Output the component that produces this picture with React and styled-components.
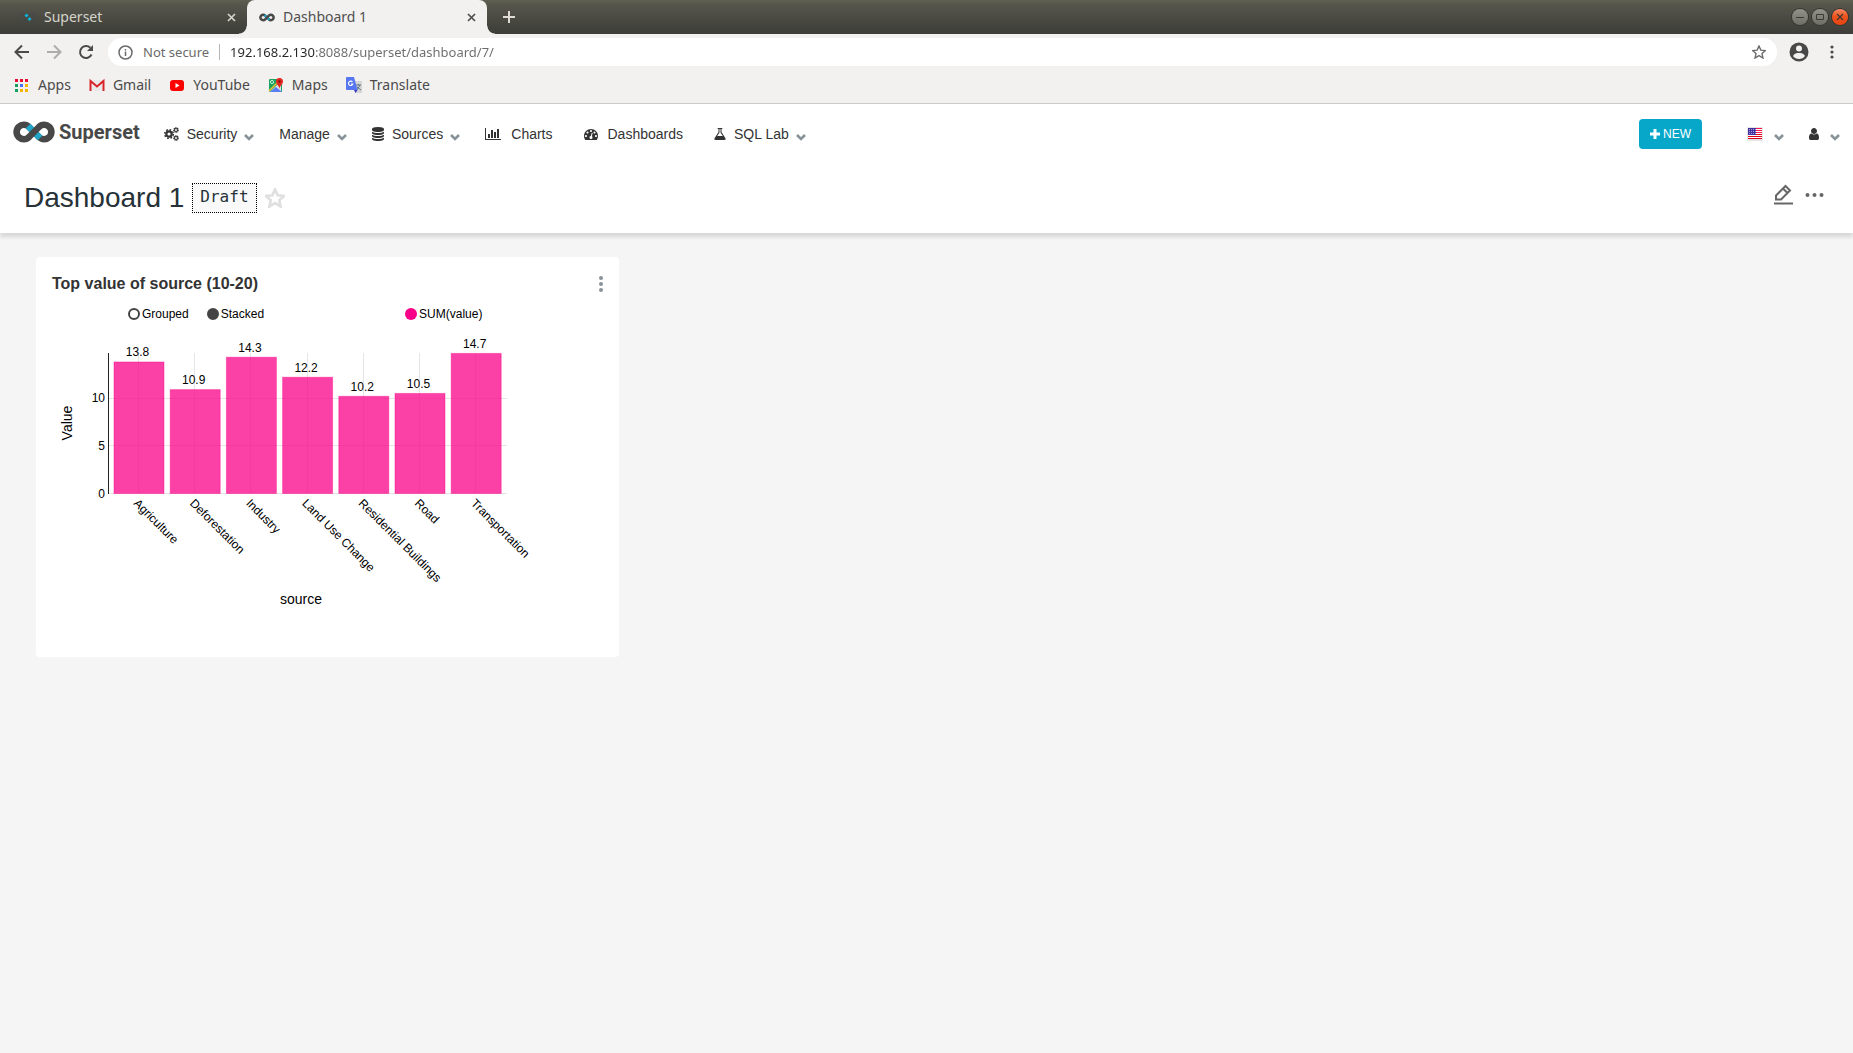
import React, { useState } from 'react';
import styled, { createGlobalStyle } from 'styled-components';

const GlobalStyle = createGlobalStyle`
  *, *::before, *::after { box-sizing: border-box; }
  body { margin: 0; background: #f5f5f5; font-family: "Liberation Sans", Arial, sans-serif; }
  button { padding: 0; border: 0; background: none; font: inherit; color: inherit; cursor: pointer; }
  a { color: inherit; text-decoration: none; }
  svg { display: block; flex: none; }
`;

const Page = styled.div`
  display: flex;
  flex-direction: column;
  min-height: 100vh;
`;

/* ---------- browser window ---------- */

const Browser = styled.div`
  font-family: "Noto Sans", "Open Sans", sans-serif;
  font-size: 14px;
  color: #4a4a4a;
  background: #f2f1f0;
  border-bottom: 1px solid #c9c9c7;
`;

const TabStrip = styled.div`
  display: flex;
  align-items: stretch;
  height: 34px;
  padding-right: 5px;
  background: linear-gradient(#5f5f52 0, #55554b 5px, #3d3d39 100%);
`;

const Tab = styled.div`
  position: relative;
  display: flex;
  align-items: center;
  gap: 8px;
  width: ${p => (p.$active ? 240 : 247)}px;
  padding: 0 9px 0 ${p => (p.$active ? 12 : 20)}px;
  border-radius: 8px 8px 0 0;
  color: ${p => (p.$active ? '#4f4f4f' : '#d5d4cb')};
  background: ${p => (p.$active ? '#f2f1f0' : 'transparent')};

  &::before, &::after {
    content: "";
    display: ${p => (p.$active ? 'block' : 'none')};
    position: absolute;
    bottom: 0;
    width: 8px;
    height: 8px;
  }
  &::before { left: -8px; background: radial-gradient(circle at 0 0, transparent 7px, #f2f1f0 8px); }
  &::after { right: -8px; background: radial-gradient(circle at 100% 0, transparent 7px, #f2f1f0 8px); }
`;

const TabTitle = styled.span`
  flex: 1;
  line-height: 20px;
`;

const IconButton = styled.button`
  display: grid;
  place-items: center;
  width: ${p => p.$size || 14}px;
  height: ${p => p.$size || 14}px;
  color: ${p => p.$color || 'inherit'};
`;

const NewTab = styled(IconButton)`
  align-self: center;
  margin-left: 15px;
  color: #dedcd5;
`;

const WindowButtons = styled.div`
  display: flex;
  align-items: center;
  gap: 4px;
  margin-left: auto;
`;

const WindowButton = styled.button`
  display: grid;
  place-items: center;
  width: 16px;
  height: 16px;
  border-radius: 50%;
  color: #3c3b37;
  box-shadow: 0 0 0 1px #35352f;
  background: ${p => (p.$close ? 'linear-gradient(#f58a68, #f0531c 45%, #e84410)' : 'linear-gradient(#94938b, #6d6c65)')};
`;

const Toolbar = styled.div`
  display: flex;
  align-items: center;
  gap: 16px;
  height: 36px;
  padding: 0 14px;
`;

const Omnibox = styled.label`
  display: flex;
  flex: 1;
  align-items: center;
  gap: 10px;
  height: 28px;
  margin: 0 -4px 0 -2px;
  padding: 0 11px 0 10px;
  border-radius: 14px;
  background: #fff;
  color: #6b6b6b;
  font-size: 13px;
`;

const Divider = styled.span`
  width: 1px;
  height: 16px;
  background: #b5b5b5;
`;

const Address = styled.input`
  flex: 1;
  min-width: 0;
  padding: 0;
  border: 0;
  outline: 0;
  font: inherit;
  color: transparent;
  background: linear-gradient(90deg, #262626 85px, #6b6b6b 85px);
  background-clip: text;
  -webkit-background-clip: text;
`;

const Security = styled.span`
  white-space: nowrap;
`;

const BrowserActions = styled.div`
  display: flex;
  align-items: center;
  gap: 14px;
  margin-right: -2px;
`;

const Bookmarks = styled.nav`
  display: flex;
  align-items: center;
  gap: 18px;
  height: 33px;
  padding: 0 14px 3px;
`;

const Bookmark = styled.a`
  display: flex;
  align-items: center;
  gap: 8px;
  line-height: 20px;
`;

/* ---------- Superset header ---------- */

const Header = styled.header`
  background: #fff;
  box-shadow: 0 4px 4px rgba(0, 0, 0, 0.12);
`;

const NavBar = styled.nav`
  display: flex;
  align-items: center;
  height: 60px;
  padding: 0 13px;
  font-size: 14px;
  line-height: 20px;
  color: #333;
`;

const Brand = styled.a`
  display: flex;
  align-items: center;
  gap: 4px;
  margin: -4px 24px 0 0;
  font: 700 20px/24px Roboto, sans-serif;
  color: #484848;
`;

const Menu = styled.div`
  display: flex;
  gap: 25px;
`;

const MenuButton = styled.button`
  display: flex;
  align-items: center;
  gap: 8px;
`;

const MenuLink = styled.a`
  display: flex;
  align-items: center;
  gap: 10px;
  padding-right: 6px;
`;

const Chevron = styled.span`
  display: block;
  margin-left: -1px;
  padding-top: 6px;
  color: #879399;
`;

const RightMenu = styled.div`
  display: flex;
  align-items: center;
  gap: 25px;
  margin-left: auto;
`;

const AccountButton = styled(MenuButton)`
  gap: 12px;
`;

const NewButton = styled.button`
  display: flex;
  align-items: center;
  justify-content: center;
  gap: 3px;
  width: 63px;
  height: 30px;
  margin-right: 20px;
  border-radius: 4px;
  font-size: 12px;
  color: #fff;
  background: #06a7c9;
`;

const TitleBar = styled.div`
  display: flex;
  align-items: center;
  gap: 8px;
  height: 69px;
  padding: 0 29px 2px 24px;
  color: #263238;
`;

const Title = styled.h1`
  margin: 0;
  font-size: 28px;
  font-weight: 400;
  line-height: 32px;
`;

const Draft = styled.button`
  height: 30px;
  padding: 0 7px 1px;
  border: 1px dotted #000;
  font: 16px/26px "DejaVu Sans Mono", monospace;
  background: #f9f9f9;
`;

const TitleActions = styled.div`
  display: flex;
  align-items: center;
  gap: 11px;
  margin: -6px 0 0 auto;
  color: #666;
`;

/* ---------- dashboard ---------- */

const Board = styled.main`
  flex: 1;
  padding: 24px 36px;
`;

const Card = styled.section`
  width: 583px;
  min-height: 400px;
  padding: 16px;
  border-radius: 4px;
  background: #fff;
`;

const CardHeader = styled.div`
  display: flex;
  align-items: center;
  justify-content: space-between;
  margin-right: -6px;
`;

const CardTitle = styled.h2`
  margin: 0;
  font-size: 16px;
  line-height: 22px;
  color: #333;
`;

const Legend = styled.div`
  display: flex;
  align-items: center;
  gap: 18px;
  padding: 11px 0 0 76px;
  font-size: 12px;
  line-height: 16px;
  color: #000;
`;

const LegendItem = styled.label`
  display: flex;
  align-items: center;
  gap: 2px;
`;

const Radio = styled.input`
  appearance: none;
  width: 12px;
  height: 12px;
  margin: 0;
  border: 2px solid #444;
  border-radius: 50%;
  &:checked { background: #444; }
`;

const Series = styled.button`
  display: flex;
  align-items: center;
  gap: 2px;
  margin-left: 123px;
`;

const Dot = styled.span`
  width: 12px;
  height: 12px;
  border-radius: 50%;
  background: #f90088;
`;

const ChartSvg = styled.svg`
  font-size: 12px;
  overflow: visible;
`;

/* ---------- icons ---------- */

const FA = {
  database: ['0 0 1536 1792', 12, 14, 'M768 768q237 0 443-43t325-127v170q0 69-103 128t-280 93.5-385 34.5-385-34.5-280-93.5-103-128v-170q119 84 325 127t443 43zm0 768q237 0 443-43t325-127v170q0 69-103 128t-280 93.5-385 34.5-385-34.5-280-93.5-103-128v-170q119 84 325 127t443 43zm0-384q237 0 443-43t325-127v170q0 69-103 128t-280 93.5-385 34.5-385-34.5-280-93.5-103-128v-170q119 84 325 127t443 43zm0-1152q208 0 385 34.5t280 93.5 103 128v128q0 69-103 128t-280 93.5-385 34.5-385-34.5-280-93.5-103-128v-128q0-69 103-128t280-93.5 385-34.5z'],
  chart: ['0 0 2048 1792', 16, 14, 'M640 896v512h-256v-512h256zm384-512v1024h-256v-1024h256zm1024 1152v128h-2048v-1536h128v1408h1920zm-640-896v768h-256v-768h256zm384-384v1152h-256v-1152h256z'],
  gauge: ['0 0 1792 1792', 14, 14, 'M384 1152q0-53-37.5-90.5t-90.5-37.5-90.5 37.5-37.5 90.5 37.5 90.5 90.5 37.5 90.5-37.5 37.5-90.5zm192-448q0-53-37.5-90.5t-90.5-37.5-90.5 37.5-37.5 90.5 37.5 90.5 90.5 37.5 90.5-37.5 37.5-90.5zm428 481l101-382q6-26-7.5-48.5t-38.5-29.5-48 6.5-30 39.5l-101 382q-60 5-107 43.5t-63 98.5q-20 77 20 146t117 89 146-20 89-117q16-60-6-117t-72-91zm660-33q0-53-37.5-90.5t-90.5-37.5-90.5 37.5-37.5 90.5 37.5 90.5 90.5 37.5 90.5-37.5 37.5-90.5zm-640-640q0-53-37.5-90.5t-90.5-37.5-90.5 37.5-37.5 90.5 37.5 90.5 90.5 37.5 90.5-37.5 37.5-90.5zm448 192q0-53-37.5-90.5t-90.5-37.5-90.5 37.5-37.5 90.5 37.5 90.5 90.5 37.5 90.5-37.5 37.5-90.5zm320 448q0 261-141 483-19 29-54 29h-1402q-35 0-54-29-141-221-141-483 0-182 71-348t191-286 286-191 348-71 348 71 286 191 191 286 71 348z'],
  flask: ['128 0 1536 1792', 12, 14, 'M1591 1448q56 89 21.5 152.5t-140.5 63.5h-1152q-106 0-140.5-63.5t21.5-152.5l503-793v-399h-64q-26 0-45-19t-19-45 19-45 45-19h512q26 0 45 19t19 45-19 45-45 19h-64v399zm-779-725l-272 429h712l-272-429-20-31v-436h-128v436z'],
  user: ['0 0 1280 1792', 10, 14, 'M1280 1399q0 109-62.5 187t-150.5 78h-854q-88 0-150.5-78t-62.5-187q0-85 8.5-160.5t31.5-152 58.5-131 94-89 134.5-34.5q131 128 313 128t313-128q76 0 134.5 34.5t94 89 58.5 131 31.5 152 8.5 160.5zm-256-887q0 159-112.5 271.5t-271.5 112.5-271.5-112.5-112.5-271.5 112.5-271.5 271.5-112.5 271.5 112.5 112.5 271.5z'],
};

function Glyph({ name }) {
  const [box, w, h, d] = FA[name];
  return <svg width={w} height={h} viewBox={box} fill="currentColor" aria-hidden="true"><path d={d} /></svg>;
}

function Cogs() {
  return (
    <svg width="15" height="14" viewBox="0 0 15 14" fill="none" stroke="currentColor" aria-hidden="true">
      <circle cx="5" cy="7" r="4.300" strokeWidth="1.600" strokeDasharray="1.700 1.677" />
      <circle cx="5" cy="7" r="2.700" strokeWidth="2.200" />
      <circle cx="12" cy="3" r="2.200" strokeWidth="1.200" strokeDasharray="1.200 .528" />
      <circle cx="12" cy="3" r="1.500" strokeWidth="1.100" />
      <circle cx="12" cy="11" r="2.200" strokeWidth="1.200" strokeDasharray="1.200 .528" />
      <circle cx="12" cy="11" r="1.500" strokeWidth="1.100" />
    </svg>
  );
}

function ChevronIcon() {
  return (
    <Chevron>
      <svg width="10" height="7" viewBox="0 0 10 7" fill="none" stroke="currentColor" strokeWidth="2.600">
        <path d="M1 1l4 4 4-4" />
      </svg>
    </Chevron>
  );
}

function Infinity({ width, height }) {
  return (
    <svg width={width} height={height} viewBox="0 0 42 22" fill="none" strokeWidth="6.600" aria-hidden="true">
      <path d="M16 16A7.200 7.200 0 1116 6L26 16A7.200 7.200 0 1026 6" stroke="#484848" />
      <path d="M15 5L27 17" stroke="#20a7c9" />
      <path d="M15.500 16.500L26.500 5.500" stroke="#484848" />
    </svg>
  );
}

function Cross() {
  return (
    <svg width="9" height="9" viewBox="0 0 9 9" stroke="currentColor" strokeWidth="1.700"><path d="M1 1l7 7M8 1l-7 7" /></svg>
  );
}

function Favicon() {
  return (
    <svg width="16" height="16" viewBox="0 0 16 16" aria-hidden="true">
      <g fill="none" stroke="#42474b" strokeWidth="1.500" opacity=".6"><circle cx="4" cy="8" r="3" /><circle cx="12" cy="8" r="3" /></g>
      <path d="M6.500 4.500l2 2-2 2-2-2zM9.500 8l2 2-2 2-2-2z" fill="#0bb4dc" />
    </svg>
  );
}

const STAR = 'M12 2.500l2.900 6.500 7.100.7-5.300 4.700 1.500 7-6.200-3.700-6.200 3.700 1.500-7L2 9.700l7.100-.7z';

function AppsIcon() {
  const colors = ['#ea0c33', '#ea0c33', '#ea0c33', '#13a05c', '#4a6ff5', '#f7b500', '#13a05c', '#f7b500', '#f7b500'];
  return (
    <svg width="16" height="16">
      {colors.map((c, i) => <rect key={i} x={1 + (i % 3) * 5} y={2 + Math.floor(i / 3) * 5} width="3" height="3" fill={c} />)}
    </svg>
  );
}

function GmailIcon() {
  return (
    <svg width="16" height="16" viewBox="0 0 16 16">
      <rect x="1" y="3" width="14" height="11" rx="1" fill="#e9e9e9" />
      <path d="M1.500 14V4l6.500 5.500L14.500 4v10" fill="none" stroke="#d9252a" strokeWidth="2" />
    </svg>
  );
}

function YouTubeIcon() {
  return (
    <svg width="16" height="16" viewBox="0 0 16 16">
      <rect x="1" y="3" width="14" height="11" rx="3" fill="#f00" />
      <path d="M6.500 6v5l4-2.500z" fill="#fff" />
    </svg>
  );
}

function MapsIcon() {
  return (
    <svg width="16" height="16" viewBox="0 0 16 16">
      <rect x="1" y="2" width="13" height="13" rx="1" fill="#1aa260" />
      <path d="M2 15L13 4v11z" fill="#dfe3ea" />
      <path d="M2 15l6-5 6 5z" fill="#5a7df5" />
      <path d="M1 14L12 3" stroke="#f8c332" strokeWidth="1.500" />
      <circle cx="4" cy="5" r="1.600" fill="none" stroke="#c8f0da" />
      <path d="M11.500 12C11.500 9 8 7.500 8 4.500a3.500 3.500 0 017 0c0 3-3.500 4.500-3.500 7.500z" fill="#e5281f" />
      <circle cx="11.500" cy="4.500" r="1.200" fill="#7b1510" />
    </svg>
  );
}

function TranslateIcon() {
  return (
    <svg width="16" height="16" viewBox="0 0 16 16">
      <path d="M7 4h9v12h-6z" fill="#d5d5d5" />
      <path d="M10 8h5M12.500 7v1M11 13l3-5M11 10l4 3" stroke="#5d7488" />
      <path d="M1 0h7l3.500 13H1a1 1 0 01-1-1V1a1 1 0 011-1z" fill="#5676f2" />
      <path d="M8 13h3.500L9.500 16z" fill="#3a32c4" />
      <path d="M6.500 5A2.200 2.200 0 106.800 7H5" fill="none" stroke="#fff" strokeWidth="1.100" />
    </svg>
  );
}

function Flag() {
  return (
    <svg width="16" height="14" viewBox="0 0 16 14" aria-hidden="true">
      <rect width="16" height="14" rx="1" fill="#e6e6e6" />
      <rect x="1" y="1" width="14" height="11" fill="#fff" />
      {[1, 3, 5, 7, 9, 11].map((y, i) => <rect key={y} x="1" y={y} width="14" height="1" fill={i < 3 ? '#f5184c' : '#e00016'} />)}
      <rect x="1" y="1" width="8" height="7" fill="#43319c" />
      {[2, 4, 6].map(y => <path key={y} d={`M2 ${y + 0.5}h7`} stroke="#a79bdc" strokeDasharray="1 1" />)}
    </svg>
  );
}

/* ---------- chart ---------- */

const DATA = [
  ['Agriculture', 13.8], ['Deforestation', 10.9], ['Industry', 14.3], ['Land Use Change', 12.2],
  ['Residential Buildings', 10.2], ['Road', 10.5], ['Transportation', 14.7],
];
const TICKS = [0, 5, 10];
const AXIS_X = 56;
const BASE_Y = 171;
const PITCH = 56.2;
const yOf = v => BASE_Y - v * 9.53;

function BarChart() {
  return (
    <ChartSvg width="551" height="300" role="img" aria-label="Top value of source">
      <g stroke="#e5e5e5" shapeRendering="crispEdges">
        {TICKS.map(t => <path key={t} d={`M${AXIS_X} ${Math.round(yOf(t)) + 0.5}H455`} />)}
        {DATA.map(([name], i) => <path key={name} d={`M${Math.round(86 + i * PITCH) + 0.5} 31V${BASE_Y}`} />)}
      </g>
      {DATA.map(([name, v], i) => (
        <rect key={name} x={62 + i * PITCH} y={yOf(v) + 0.5} width="50" height={BASE_Y - yOf(v)} fill="#f90088" fillOpacity=".75" stroke="#f90088" strokeOpacity=".4" />
      ))}
      <path d={`M${AXIS_X + 0.5} 31V${BASE_Y + 1}`} stroke="#222" shapeRendering="crispEdges" />
      <g textAnchor="middle">
        {DATA.map(([name, v], i) => <text key={name} x={85.500 + i * PITCH} y={Math.round(yOf(v) - 5)}>{v}</text>)}
      </g>
      <g textAnchor="end">
        {TICKS.map(t => <text key={t} x="53" y={Math.floor(yOf(t) + 5)}>{t}</text>)}
      </g>
      {DATA.map(([name], i) => (
        <text key={name} transform={`translate(${81 + i * PITCH} 182) rotate(45)`}>{name}</text>
      ))}
      <text fontSize="14" textAnchor="middle" transform="translate(20 101) rotate(-90)">Value</text>
      <text fontSize="14" textAnchor="middle" x="249" y="282">source</text>
    </ChartSvg>
  );
}

export default function App() {
  const [mode, setMode] = useState('Stacked');
  return (
    <Page>
      <GlobalStyle />
      <Browser>
        <TabStrip>
          <Tab>
            <Favicon />
            <TabTitle>Superset</TabTitle>
            <IconButton aria-label="Close tab"><Cross /></IconButton>
          </Tab>
          <Tab $active>
            <Infinity width={16} height={9} />
            <TabTitle>Dashboard 1</TabTitle>
            <IconButton aria-label="Close tab"><Cross /></IconButton>
          </Tab>
          <NewTab aria-label="New tab">
            <svg width="12" height="12" stroke="currentColor" strokeWidth="2"><path d="M6 0v12M0 6h12" /></svg>
          </NewTab>
          <WindowButtons>
            <WindowButton aria-label="Minimize"><svg width="8" height="8" stroke="currentColor"><path d="M0 4.500h8" /></svg></WindowButton>
            <WindowButton aria-label="Maximize"><svg width="8" height="8" fill="none" stroke="currentColor"><path d="M.5 1.500h7v5h-7z" /></svg></WindowButton>
            <WindowButton $close aria-label="Close"><svg width="8" height="8" stroke="currentColor" strokeWidth="1.400"><path d="M1 1l6 6M7 1l-6 6" /></svg></WindowButton>
          </WindowButtons>
        </TabStrip>
        <Toolbar>
          <IconButton $size={16} aria-label="Back">
            <svg width="16" height="16" fill="none" stroke="currentColor" strokeWidth="2"><path d="M15 8H2M8 1.500L1.500 8 8 14.500" /></svg>
          </IconButton>
          <IconButton $size={16} $color="#acacab" aria-label="Forward">
            <svg width="16" height="16" fill="none" stroke="currentColor" strokeWidth="2"><path d="M1 8h13M8 1.500l6.500 6.500L8 14.500" /></svg>
          </IconButton>
          <IconButton $size={16} aria-label="Reload">
            <svg width="16" height="16" fill="none"><path d="M13.500 10.500A6 6 0 1112.300 3.800" stroke="currentColor" strokeWidth="2" /><path d="M15 1v6H9z" fill="currentColor" /></svg>
          </IconButton>
          <Omnibox>
            <svg width="15" height="15" fill="none" stroke="currentColor" strokeWidth="1.500"><circle cx="7.500" cy="7.500" r="6.500" /><path d="M7.500 6.500v4.500M7.500 4v1.500" /></svg>
            <Security>Not secure</Security>
            <Divider />
            <Address aria-label="Address" defaultValue="192.168.2.130:8088/superset/dashboard/7/" />
            <IconButton $size={15} aria-label="Bookmark this page">
              <svg width="14" height="14" viewBox="1 1 22 22" fill="none" stroke="currentColor" strokeWidth="2.200"><path d={STAR} /></svg>
            </IconButton>
          </Omnibox>
          <BrowserActions>
            <IconButton $size={20} aria-label="Profile">
              <svg width="20" height="20" viewBox="0 0 20 20"><circle cx="10" cy="10" r="9.500" fill="#484848" /><circle cx="10" cy="6.500" r="3" fill="#f2f1f0" /><path d="M4 14c1-2.500 4-3 6-3s5 .5 6 3c-1.300 1.900-3.500 3-6 3s-4.700-1.100-6-3z" fill="#f2f1f0" /></svg>
            </IconButton>
            <IconButton $size={18} aria-label="Browser menu">
              <svg width="4" height="14" fill="currentColor"><circle cx="2" cy="2" r="1.600" /><circle cx="2" cy="7" r="1.600" /><circle cx="2" cy="12" r="1.600" /></svg>
            </IconButton>
          </BrowserActions>
        </Toolbar>
        <Bookmarks>
          <Bookmark href="#apps"><AppsIcon />Apps</Bookmark>
          <Bookmark href="#gmail"><GmailIcon />Gmail</Bookmark>
          <Bookmark href="#youtube"><YouTubeIcon />YouTube</Bookmark>
          <Bookmark href="#maps"><MapsIcon />Maps</Bookmark>
          <Bookmark href="#translate"><TranslateIcon />Translate</Bookmark>
        </Bookmarks>
      </Browser>

      <Header>
        <NavBar>
          <Brand href="#home"><Infinity width={42} height={22} />Superset</Brand>
          <Menu>
            <MenuButton><Cogs />Security<ChevronIcon /></MenuButton>
            <MenuButton>Manage<ChevronIcon /></MenuButton>
            <MenuButton><Glyph name="database" />Sources<ChevronIcon /></MenuButton>
            <MenuLink href="#charts"><Glyph name="chart" />Charts</MenuLink>
            <MenuLink href="#dashboards"><Glyph name="gauge" />Dashboards</MenuLink>
            <MenuButton><Glyph name="flask" />SQL Lab<ChevronIcon /></MenuButton>
          </Menu>
          <RightMenu>
            <NewButton>
              <svg width="10" height="10" fill="currentColor"><path d="M3.500 0h3v3.500H10v3H6.500V10h-3V6.500H0v-3h3.500z" /></svg>
              NEW
            </NewButton>
            <AccountButton aria-label="Language"><Flag /><ChevronIcon /></AccountButton>
            <AccountButton aria-label="User"><Glyph name="user" /><ChevronIcon /></AccountButton>
          </RightMenu>
        </NavBar>
        <TitleBar>
          <Title>Dashboard 1</Title>
          <Draft>Draft</Draft>
          <IconButton $size={20} $color="#e0e0e0" aria-label="Favorite">
            <svg width="20" height="20" viewBox="1 1 22 22" fill="none" stroke="currentColor" strokeWidth="3"><path d={STAR} /></svg>
          </IconButton>
          <TitleActions>
            <IconButton $size={21} aria-label="Edit dashboard">
              <svg width="21" height="21" fill="none" stroke="currentColor" strokeWidth="2">
                <path d="M3 15.500v-4L12.500 2l4.500 4.500-9 9zM10 4.500L14.500 9" />
                <path d="M1 19.500h19" />
              </svg>
            </IconButton>
            <IconButton $size={19} aria-label="More options">
              <svg width="19" height="4" fill="currentColor"><circle cx="2.500" cy="2" r="2" /><circle cx="9.500" cy="2" r="2" /><circle cx="16.500" cy="2" r="2" /></svg>
            </IconButton>
          </TitleActions>
        </TitleBar>
      </Header>

      <Board>
        <Card>
          <CardHeader>
            <CardTitle>Top value of source (10-20)</CardTitle>
            <IconButton $size={16} $color="#879399" aria-label="Chart options">
              <svg width="4" height="16" fill="currentColor"><circle cx="2" cy="2" r="2" /><circle cx="2" cy="8" r="2" /><circle cx="2" cy="14" r="2" /></svg>
            </IconButton>
          </CardHeader>
          <Legend>
            {['Grouped', 'Stacked'].map(m => (
              <LegendItem key={m}>
                <Radio type="radio" name="mode" checked={mode === m} onChange={() => setMode(m)} />{m}
              </LegendItem>
            ))}
            <Series><Dot />SUM(value)</Series>
          </Legend>
          <BarChart />
        </Card>
      </Board>
    </Page>
  );
}
